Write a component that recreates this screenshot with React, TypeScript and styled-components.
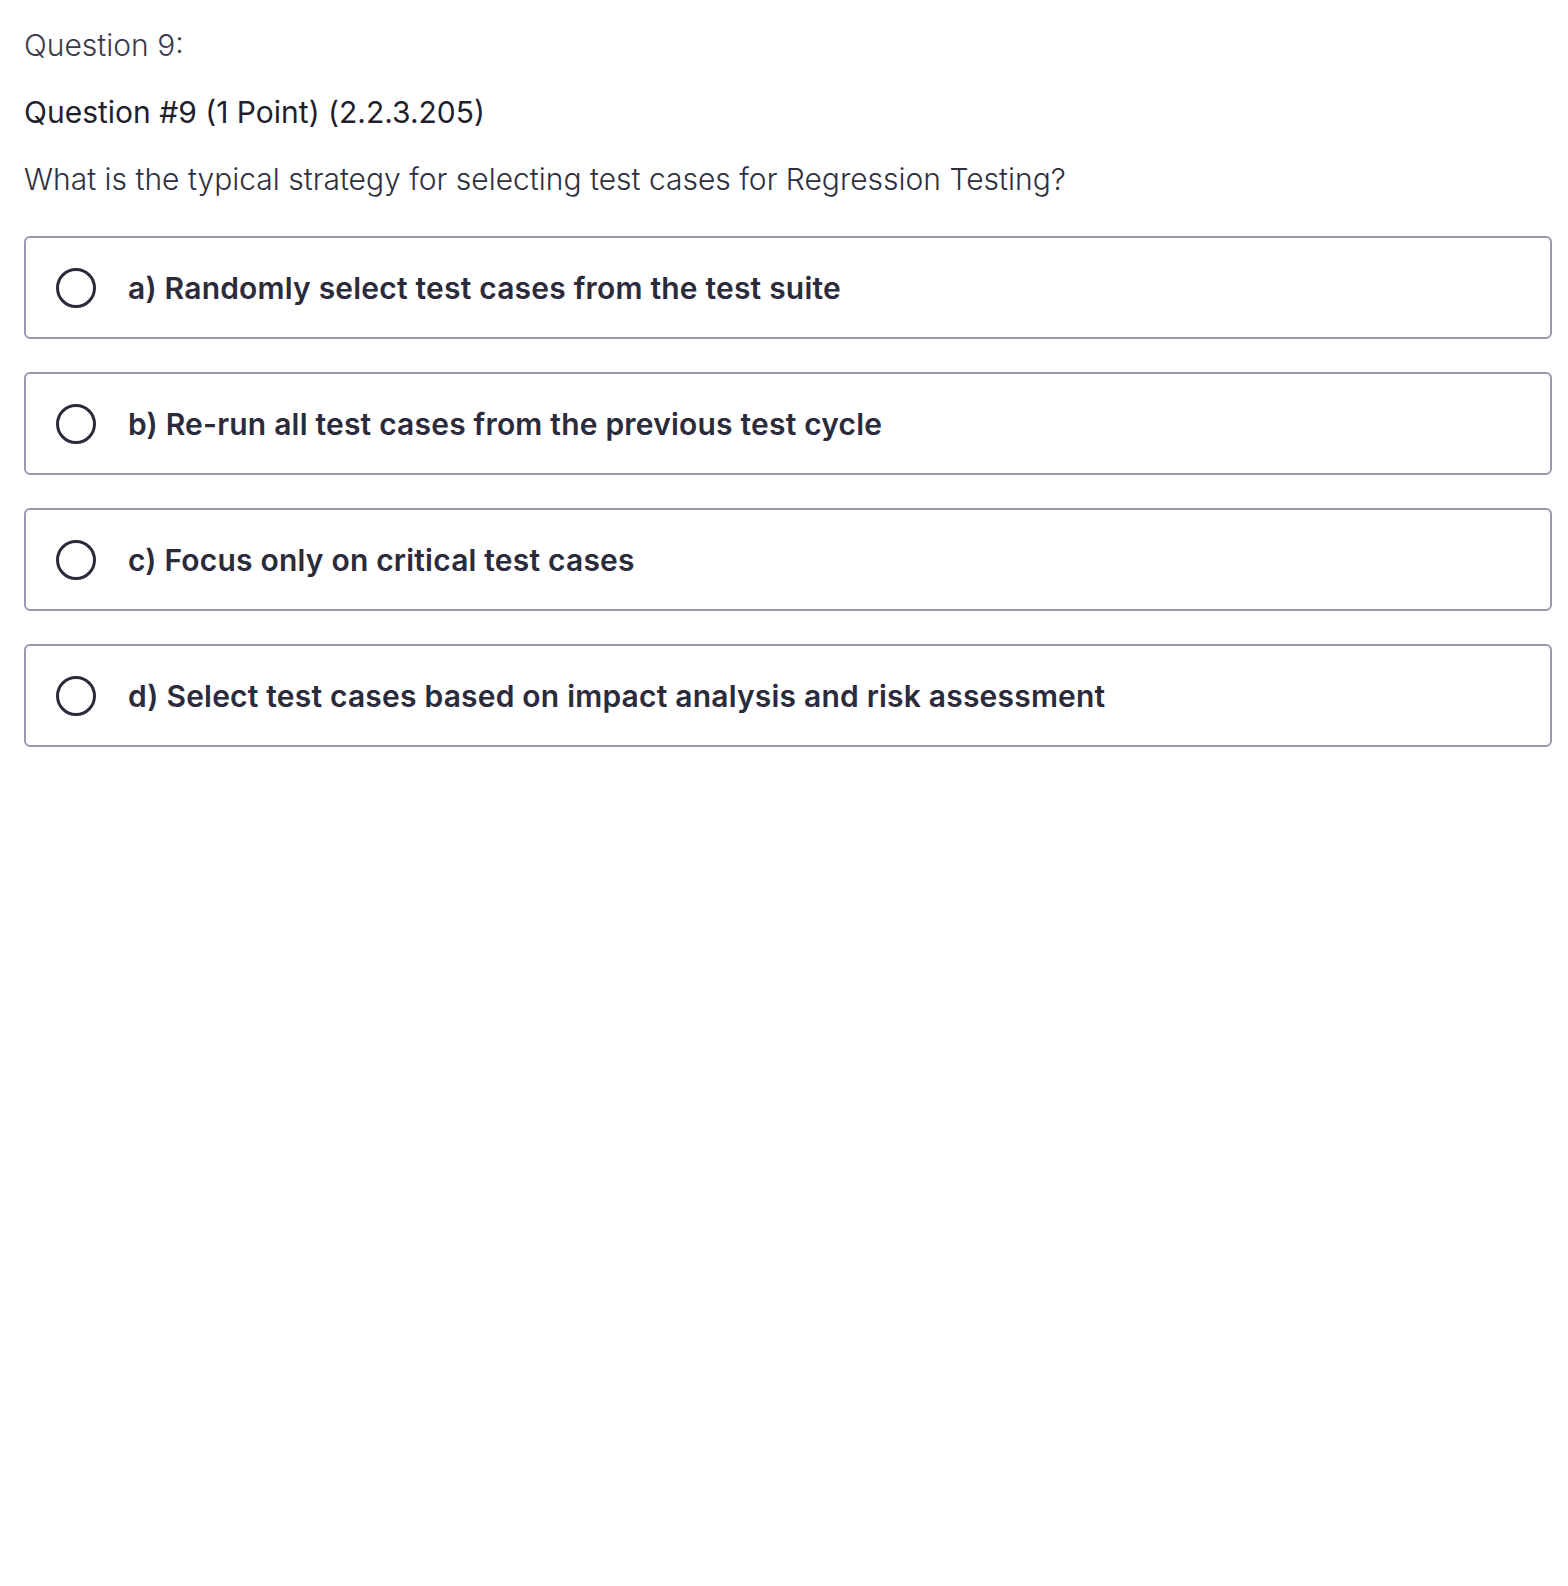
import React from "react";
import styled, { createGlobalStyle } from "styled-components";

const GlobalStyle = createGlobalStyle`
  body {
    margin: 0;
    background: #ffffff;
    font-family: Inter, "Noto Sans", sans-serif;
    color: #2b2b3b;
  }
`;

const Page = styled.main`
  padding: 25px 16px 0 24px;
`;

const Heading = styled.div`
  font-size: 30px;
  font-weight: 300;
  line-height: 40px;
  color: #3b3b4b;
  margin-bottom: 27px;
`;

const Title = styled.div`
  font-size: 30px;
  font-weight: 400;
  line-height: 40px;
  color: #1f1f2e;
  margin-bottom: 27px;
`;

const Prompt = styled.p`
  font-size: 30px;
  font-weight: 300;
  line-height: 40px;
  color: #2f2f3f;
  margin: 0 0 37px;
`;

const Options = styled.div`
  display: flex;
  flex-direction: column;
  gap: 33px;
`;

const Option = styled.label`
  display: flex;
  align-items: center;
  gap: 32px;
  height: 103px;
  box-sizing: border-box;
  padding: 0 30px;
  border: 2px solid #9a9aae;
  border-radius: 6px;
  cursor: pointer;
`;

const Radio = styled.span`
  width: 40px;
  height: 40px;
  box-sizing: border-box;
  border: 3.5px solid #2b2b3b;
  border-radius: 50%;
  flex-shrink: 0;
`;

const OptionText = styled.span`
  font-size: 30px;
  font-weight: 600;
  letter-spacing: 0.2px;
  color: #2b2b3b;
`;

const answers = [
  "a) Randomly select test cases from the test suite",
  "b) Re-run all test cases from the previous test cycle",
  "c) Focus only on critical test cases",
  "d) Select test cases based on impact analysis and risk assessment",
];

export default function App() {
  return (
    <>
      <GlobalStyle />
      <Page>
        <Heading>Question 9:</Heading>
        <Title>Question #9 (1 Point) (2.2.3.205)</Title>
        <Prompt>What is the typical strategy for selecting test cases for Regression Testing?</Prompt>
        <Options>
          {answers.map((a) => (
            <Option key={a}>
              <Radio />
              <OptionText>{a}</OptionText>
            </Option>
          ))}
        </Options>
      </Page>
    </>
  );
}
